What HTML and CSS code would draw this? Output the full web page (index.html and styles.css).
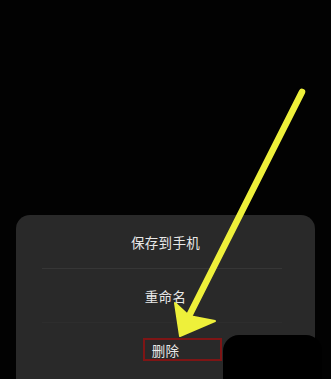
FILE: index.html
```html
<!DOCTYPE html>
<html lang="zh-CN">
<head>
  <meta charset="UTF-8" />
  <meta name="viewport" content="width=device-width, initial-scale=1.0"/>
  <title>文件操作</title>
  <link rel="stylesheet" href="styles.css">
</head>
<body>

<div class="page">
  <!-- Bottom action sheet -->
  <div class="sheet">
    <div class="sheet-item">保存到手机</div>
    <div class="divider"></div>
    <div class="sheet-item">重命名</div>
    <div class="divider faint"></div>
    <div class="sheet-item delete">删除</div>
  </div>

  <!-- Annotations drawn over the screenshot -->
  <div class="mark-box"></div>
  <div class="redact"></div>
  <svg class="arrow" width="331" height="379" viewBox="0 0 331 379">
    <line x1="302" y1="92" x2="188" y2="318" stroke="#eef03a" stroke-width="6.5" stroke-linecap="round"/>
    <polygon points="180,336 175,303 189,316 215,321" fill="#eef03a" stroke="#eef03a" stroke-width="2" stroke-linejoin="round"/>
  </svg>
</div>

</body>
</html>
```

FILE: styles.css
```css
* { margin: 0; padding: 0; box-sizing: border-box; }
html, body {
  width: 331px;
  height: 379px;
  background: #020202;
  overflow: hidden;
}
body {
  font-family: "Noto Sans CJK SC", "Noto Sans", sans-serif;
  color: #e8e8e8;
}
.page {
  position: relative;
  width: 331px;
  height: 379px;
  display: flex;
  flex-direction: column;
  padding-top: 215px;
}
.sheet {
  flex: 1;
  margin: 0 16px 0 16px;
  background: #292929;
  border-radius: 14px 14px 0 0;
  display: flex;
  flex-direction: column;
}
.sheet-item {
  height: 53px;
  display: flex;
  align-items: center;
  justify-content: center;
  font-size: 13.5px;
  letter-spacing: 0.3px;
}
.divider {
  height: 1px;
  margin: 0 33px 0 26px;
  background: #363636;
}
.divider.faint { background: #2d2d2d; }

.mark-box {
  position: absolute;
  left: 143px;
  top: 338px;
  width: 79px;
  height: 23px;
  border: 2px solid #7e1515;
}
.redact {
  position: absolute;
  left: 223px;
  top: 335px;
  width: 99px;
  height: 60px;
  background: #000;
  border-radius: 16px;
}
.arrow {
  position: absolute;
  left: 0;
  top: 0;
}
```
